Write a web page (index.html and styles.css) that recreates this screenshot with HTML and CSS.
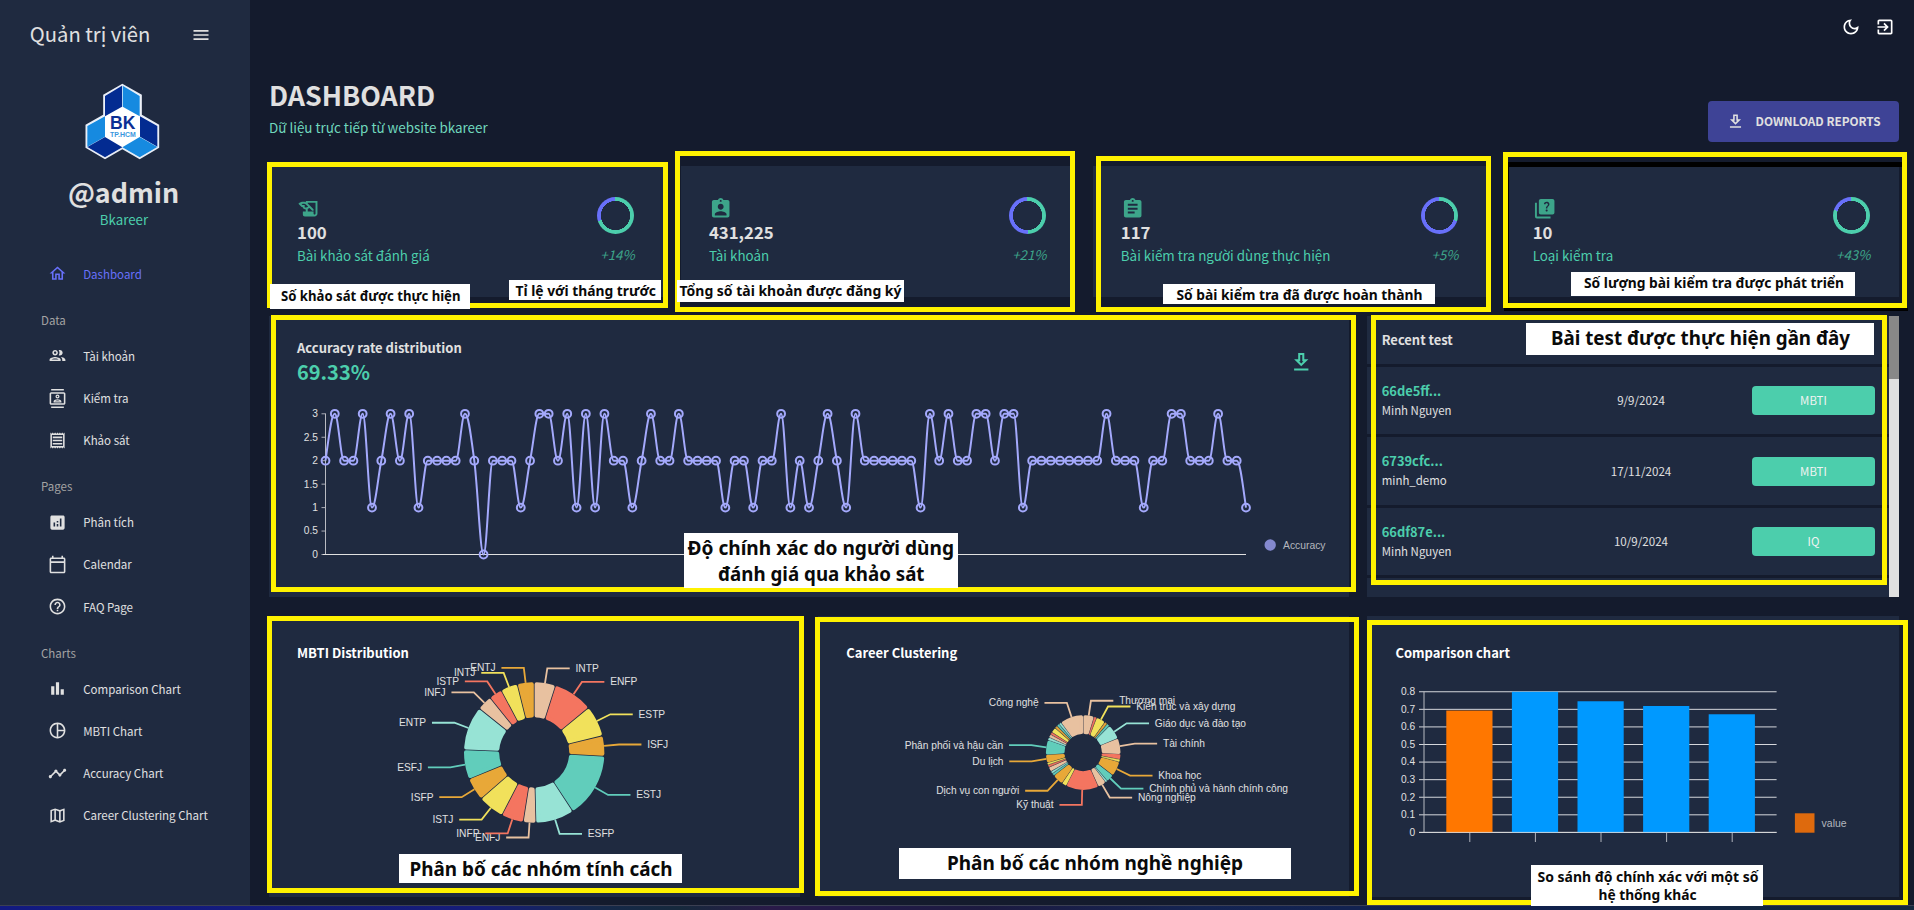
FILE: index.html
```html
<!DOCTYPE html>
<html lang="vi">
<head>
<meta charset="utf-8">
<title>Dashboard</title>
<link rel="stylesheet" href="styles.css">
</head>
<body>
<div class="app">
  <aside class="sidebar">
    <div class="brand">
      <span class="brand-name">Quản trị viên</span>
      <svg class="icon-menu" viewBox="0 0 24 24"><path d="M3 18h18v-2H3v2zm0-5h18v-2H3v2zm0-7v2h18V6z"/></svg>
    </div>
    <svg class="logo" viewBox="256 249 224 230">
      <path d="M368 254L424 286V346L476 376V442L420 475L368 445L316 475L260 442V376L313 346V286Z" fill="#fff" stroke="#e9eef7" stroke-width="5"/>
      <path d="M367 257V320L316 349V288Z" fill="#032b91"/>
      <path d="M369 257V320L420 349V288Z" fill="#168ae0"/>
      <path d="M263 378L316 349V410L263 440Z" fill="#168ae0"/>
      <path d="M263 441L316 411L368 442L316 472Z" fill="#032b91"/>
      <path d="M421 349L473 378V440L421 410Z" fill="#032b91"/>
      <path d="M420 411L473 441L420 472L368 442Z" fill="#168ae0"/>
      <text x="331" y="388" class="logo-bk" textLength="76" lengthAdjust="spacingAndGlyphs">BK</text>
      <text x="331" y="410" class="logo-city" textLength="77" lengthAdjust="spacingAndGlyphs">TP.HCM</text>
    </svg>
    <div class="user-name">@admin</div>
    <div class="user-role">Bkareer</div>
    <nav class="menu">
      <a class="item active"><svg viewBox="0 0 24 24"><path d="M12 5.69l5 4.5V18h-2v-6H9v6H7v-7.81l5-4.5M12 3L2 12h3v8h6v-6h2v6h6v-8h3L12 3z"/></svg>Dashboard</a>
      <div class="section">Data</div>
      <a class="item"><svg viewBox="0 0 24 24"><path d="M9 13.75c-2.34 0-7 1.17-7 3.5V19h14v-1.75c0-2.33-4.66-3.5-7-3.5zM4.34 17c.84-.58 2.87-1.25 4.66-1.25s3.82.67 4.66 1.25H4.34zM9 12c1.93 0 3.5-1.57 3.5-3.5S10.93 5 9 5 5.5 6.57 5.5 8.5 7.07 12 9 12zm0-5c.83 0 1.5.67 1.5 1.5S9.83 10 9 10s-1.5-.67-1.5-1.5S8.17 7 9 7zm7.04 6.81c1.16.84 1.96 1.96 1.96 3.44V19h4v-1.75c0-2.02-3.5-3.17-5.96-3.44zM15 12c1.93 0 3.5-1.57 3.5-3.5S16.93 5 15 5c-.54 0-1.04.13-1.5.35.63.89 1 1.98 1 3.15s-.37 2.26-1 3.15c.46.22.96.35 1.5.35z"/></svg>Tài khoản</a>
      <a class="item"><svg viewBox="0 0 24 24"><path d="M20 4H4c-1.1 0-2 .9-2 2v12c0 1.1.9 2 2 2h16c1.1 0 2-.9 2-2V6c0-1.1-.9-2-2-2zm0 14H4V6h16v12zM4 0h16v2H4zM4 22h16v2H4zM12 12c1.38 0 2.5-1.12 2.5-2.5S13.38 7 12 7 9.5 8.12 9.5 9.5 10.62 12 12 12zm0-3.5c.55 0 1 .45 1 1s-.45 1-1 1-1-.45-1-1 .45-1 1-1zm5 7.49C17 13.9 13.69 13 12 13s-5 .9-5 2.99V17h10v-1.01zm-8.19-.49c.61-.52 2.03-1 3.19-1 1.17 0 2.59.48 3.2 1H8.81z"/></svg>Kiểm tra</a>
      <a class="item"><svg viewBox="0 0 24 24"><path d="M19.5 3.5L18 2l-1.5 1.5L15 2l-1.5 1.5L12 2l-1.5 1.5L9 2 7.5 3.5 6 2 4.5 3.5 3 2v20l1.5-1.5L6 22l1.5-1.5L9 22l1.5-1.5L12 22l1.5-1.5L15 22l1.5-1.5L18 22l1.5-1.5L21 22V2l-1.5 1.5zM19 19.09H5V4.91h14v14.18zM6 15h12v2H6zm0-4h12v2H6zm0-4h12v2H6z"/></svg>Khảo sát</a>
      <div class="section">Pages</div>
      <a class="item"><svg viewBox="0 0 24 24"><path d="M19 3H5c-1.1 0-2 .9-2 2v14c0 1.1.9 2 2 2h14c1.1 0 2-.9 2-2V5c0-1.1-.9-2-2-2zM9 17H7v-5h2v5zm4 0h-2v-3h2v3zm0-5h-2v-2h2v2zm4 5h-2V7h2v10z"/></svg>Phân tích</a>
      <a class="item"><svg viewBox="0 0 24 24"><path d="M20 3h-1V1h-2v2H7V1H5v2H4c-1.1 0-2 .9-2 2v16c0 1.1.9 2 2 2h16c1.1 0 2-.9 2-2V5c0-1.1-.9-2-2-2zm0 18H4V10h16v11zm0-13H4V5h16v3z"/></svg>Calendar</a>
      <a class="item"><svg viewBox="0 0 24 24"><path d="M11 18h2v-2h-2v2zm1-16C6.48 2 2 6.48 2 12s4.48 10 10 10 10-4.48 10-10S17.52 2 12 2zm0 18c-4.41 0-8-3.59-8-8s3.59-8 8-8 8 3.59 8 8-3.59 8-8 8zm0-14c-2.21 0-4 1.79-4 4h2c0-1.1.9-2 2-2s2 .9 2 2c0 2-3 1.75-3 5h2c0-2.25 3-2.5 3-5 0-2.21-1.79-4-4-4z"/></svg>FAQ Page</a>
      <div class="section">Charts</div>
      <a class="item"><svg viewBox="0 0 24 24"><path d="M4 9h4v11H4zm12 4h4v7h-4zm-6-9h4v16h-4z"/></svg>Comparison Chart</a>
      <a class="item"><svg viewBox="0 0 24 24"><path d="M12 2C6.48 2 2 6.48 2 12s4.48 10 10 10 10-4.48 10-10S17.52 2 12 2zm1 2.07c3.61.45 6.48 3.33 6.93 6.93H13V4.07zM4 12c0-4.06 3.07-7.44 7-7.93v15.87c-3.93-.5-7-3.88-7-7.94zm9 7.93V13h6.93c-.45 3.61-3.32 6.48-6.93 6.93z"/></svg>MBTI Chart</a>
      <a class="item"><svg viewBox="0 0 24 24"><path d="M23 8c0 1.1-.9 2-2 2-.18 0-.35-.02-.51-.07l-3.56 3.55c.05.16.07.34.07.52 0 1.1-.9 2-2 2s-2-.9-2-2c0-.18.02-.36.07-.52l-2.55-2.55c-.16.05-.34.07-.52.07s-.36-.02-.52-.07l-4.55 4.56c.05.16.07.33.07.51 0 1.1-.9 2-2 2s-2-.9-2-2 .9-2 2-2c.18 0 .35.02.51.07l4.56-4.55C8.02 9.36 8 9.18 8 9c0-1.1.9-2 2-2s2 .9 2 2c0 .18-.02.36-.07.52l2.55 2.55c.16-.05.34-.07.52-.07s.36.02.52.07l3.55-3.56C19.02 8.35 19 8.18 19 8c0-1.1.9-2 2-2s2 .9 2 2z"/></svg>Accuracy Chart</a>
      <a class="item"><svg viewBox="0 0 24 24"><path d="M20.5 3l-.16.03L15 5.1 9 3 3.36 4.9c-.21.07-.36.25-.36.48V20.5c0 .28.22.5.5.5l.16-.03L9 18.9l6 2.1 5.64-1.9c.21-.07.36-.25.36-.48V3.5c0-.28-.22-.5-.5-.5zM10 5.47l4 1.4v11.66l-4-1.4V5.47zm-5 .99l3-1.01v11.7l-3 1.16V6.46zm14 11.08l-3 1.01V6.86l3-1.16v11.84z"/></svg>Career Clustering Chart</a>
    </nav>
  </aside>

  <main class="main">
    <div class="topbar">
      <svg viewBox="0 0 24 24"><path d="M9.37 5.51c-.18.64-.27 1.31-.27 1.99 0 4.08 3.32 7.4 7.4 7.4.68 0 1.35-.09 1.99-.27C17.45 17.19 14.93 19 12 19c-3.86 0-7-3.14-7-7 0-2.93 1.81-5.45 4.37-6.49zM12 3c-4.97 0-9 4.03-9 9s4.03 9 9 9 9-4.03 9-9c0-.46-.04-.92-.1-1.36-.98 1.37-2.58 2.26-4.4 2.26-2.98 0-5.4-2.42-5.4-5.4 0-1.81.89-3.42 2.26-4.4-.44-.06-.9-.1-1.36-.1z"/></svg>
      <svg viewBox="0 0 24 24"><path d="M19 3H5c-1.11 0-2 .9-2 2v4h2V5h14v14H5v-4H3v4c0 1.1.89 2 2 2h14c1.1 0 2-.9 2-2V5c0-1.1-.9-2-2-2zm-8.92 12.59L11.5 17l5-5-5-5-1.41 1.41L12.67 11H3v2h9.67z"/></svg>
    </div>
    <header class="heading">
      <div>
        <h1>DASHBOARD</h1>
        <p>Dữ liệu trực tiếp từ website bkareer</p>
      </div>
      <button class="download"><svg viewBox="0 0 24 24"><path d="M19 9h-4V3H9v6H5l7 7 7-7zm-8 2V5h2v6h1.17L12 13.17 9.83 11H11zm-6 7h14v2H5z"/></svg>DOWNLOAD REPORTS</button>
    </header>

    <div class="grid">
      <section class="card stat">
        <div class="stat-left"><svg viewBox="0 0 24 24"><path d="M9 4v1.38c-.83-.33-1.72-.5-2.61-.5-1.79 0-3.58.68-4.95 2.05l3.33 3.33h1.11v1.11c.86.86 1.98 1.31 3.11 1.36V15H6v3c0 1.1.9 2 2 2h10c1.66 0 3-1.34 3-3V4H9zm-1.11 6.41V8.26H5.61L4.57 7.22a5.07 5.07 0 0 1 1.82-.34c1.34 0 2.59.52 3.54 1.46l1.41 1.41-.2.2a2.7 2.7 0 0 1-1.92.8c-.47 0-.93-.12-1.33-.34zM19 17c0 .55-.45 1-1 1s-1-.45-1-1v-2h-6v-2.59c.57-.23 1.1-.57 1.56-1.03l.2-.2L15.59 14H17v-1.41l-6-5.97V6h8v11z"/></svg><b>100</b><span>Bài khảo sát đánh giá</span></div>
        <div class="stat-right"><div class="ring" style="--p:252deg"></div><em>+14%</em></div>
      </section>
      <section class="card stat">
        <div class="stat-left"><svg viewBox="0 0 24 24"><path d="M19 3h-4.18C14.4 1.84 13.3 1 12 1c-1.3 0-2.4.84-2.82 2H5c-1.1 0-2 .9-2 2v14c0 1.1.9 2 2 2h14c1.1 0 2-.9 2-2V5c0-1.1-.9-2-2-2zm-7 0c.55 0 1 .45 1 1s-.45 1-1 1-1-.45-1-1 .45-1 1-1zm0 4c1.66 0 3 1.34 3 3s-1.34 3-3 3-3-1.34-3-3 1.34-3 3-3zm6 12H6v-1.4c0-2 4-3.1 6-3.1s6 1.1 6 3.1V19z"/></svg><b>431,225</b><span>Tài khoản</span></div>
        <div class="stat-right"><div class="ring" style="--p:180deg"></div><em>+21%</em></div>
      </section>
      <section class="card stat">
        <div class="stat-left"><svg viewBox="0 0 24 24"><path d="M19 3h-4.18C14.4 1.84 13.3 1 12 1c-1.3 0-2.4.84-2.82 2H5c-1.1 0-2 .9-2 2v14c0 1.1.9 2 2 2h14c1.1 0 2-.9 2-2V5c0-1.1-.9-2-2-2zm-7 0c.55 0 1 .45 1 1s-.45 1-1 1-1-.45-1-1 .45-1 1-1zm2 14H7v-2h7v2zm3-4H7v-2h10v2zm0-4H7V7h10v2z"/></svg><b>117</b><span>Bài kiểm tra người dùng thực hiện</span></div>
        <div class="stat-right"><div class="ring" style="--p:108deg"></div><em>+5%</em></div>
      </section>
      <section class="card stat">
        <div class="stat-left"><svg viewBox="0 0 24 24"><path d="M4 6H2v14c0 1.1.9 2 2 2h14v-2H4V6z"/><path d="M20 2H8c-1.1 0-2 .9-2 2v12c0 1.1.9 2 2 2h12c1.1 0 2-.9 2-2V4c0-1.1-.9-2-2-2zm-5.99 13c-.59 0-1.05-.47-1.05-1.05 0-.59.47-1.04 1.05-1.04.59 0 1.04.45 1.04 1.04-.01.58-.45 1.05-1.04 1.05zm2.5-6.17c-.63.93-1.23 1.21-1.56 1.81-.13.24-.18.4-.18 1.18h-1.52c0-.41-.06-1.08.26-1.65.41-.73 1.18-1.16 1.63-1.8.48-.68.21-1.94-1.14-1.94-.88 0-1.32.67-1.5 1.23l-1.37-.57C11.51 5.96 12.52 5 13.99 5c1.23 0 2.08.56 2.51 1.26.37.61.58 1.73.01 2.57z"/></svg><b>10</b><span>Loại kiểm tra</span></div>
        <div class="stat-right"><div class="ring" style="--p:288deg"></div><em>+43%</em></div>
      </section>

      <section class="card accuracy">
        <div class="accuracy-head">
          <div><h2>Accuracy rate distribution</h2><strong>69.33%</strong></div>
          <svg viewBox="0 0 24 24"><path d="M19 9h-4V3H9v6H5l7 7 7-7zm-8 2V5h2v6h1.17L12 13.17 9.83 11H11zm-6 7h14v2H5z"/></svg>
        </div>
        <svg id="line" class="chart" width="1080" height="180" viewBox="269 400 1080 180"></svg>
      </section>

      <section class="recent">
        <div class="recent-list">
          <div class="recent-head">Recent test</div>
          <div class="row"><div><b>66de5ff...</b><span>Minh Nguyen</span></div><time>9/9/2024</time><i>MBTI</i></div>
          <div class="row"><div><b>6739cfc...</b><span>minh_demo</span></div><time>17/11/2024</time><i>MBTI</i></div>
          <div class="row"><div><b>66df87e...</b><span>Minh Nguyen</span></div><time>10/9/2024</time><i>IQ</i></div>
          <div class="row-rest"></div>
        </div>
        <div class="scrollbar"><div class="thumb"></div></div>
      </section>

      <section class="card panel"><h2>MBTI Distribution</h2><svg id="mbti" class="chart" width="531" height="226" viewBox="269 671 531 226"></svg></section>
      <section class="card panel"><h2>Career Clustering</h2><svg id="career" class="chart" width="531" height="226" viewBox="818 671 531 226"></svg></section>
      <section class="card panel"><h2>Comparison chart</h2><svg id="bars" class="chart" width="531" height="226" viewBox="1367.4 671 531 226"></svg></section>
    </div>
  </main>
</div>
<div class="bottom-strip"></div>

<svg class="notes" width="1914" height="910" viewBox="0 0 1914 910">
  <g fill="#000">
    <rect x="1508" y="162" width="394" height="5"/><rect x="1508" y="162" width="1" height="141"/><rect x="1504" y="308" width="404" height="3"/>
  </g>
  <g fill="none" stroke="#fff200" stroke-width="5">
    <rect x="269.5" y="164.5" width="396" height="141"/>
    <rect x="677.5" y="153.5" width="395" height="156"/>
    <rect x="1098.5" y="158.5" width="390" height="151"/>
    <rect x="1505.5" y="154.5" width="399" height="151"/>
    <rect x="273.5" y="317.5" width="1080" height="272"/>
    <rect x="1373.5" y="317.5" width="511" height="265"/>
    <rect x="269.5" y="618.5" width="532" height="272"/>
    <rect x="817.5" y="619.5" width="539" height="274"/>
    <rect x="1369.5" y="622.5" width="536" height="280"/>
  </g>
  <g fill="#fff">
    <rect x="270" y="284" width="200" height="25"/><rect x="509" y="280" width="152" height="20"/>
    <rect x="677" y="280" width="227" height="22"/><rect x="1163" y="284" width="272" height="20"/>
    <rect x="1571" y="272" width="284" height="24"/><rect x="1526" y="323" width="348" height="32"/>
    <rect x="684" y="533" width="274" height="55"/><rect x="399" y="854" width="283" height="29"/>
    <rect x="899" y="848" width="392" height="31"/><rect x="1531" y="865" width="232" height="41"/>
  </g>
  <g class="note-text">
    <text x="281" y="300.5" textLength="179.5" lengthAdjust="spacingAndGlyphs">Số khảo sát được thực hiện</text>
    <text x="515.5" y="296.2" textLength="140.5" lengthAdjust="spacingAndGlyphs">Tỉ lệ với tháng trước</text>
    <text x="679.5" y="296.2" textLength="222" lengthAdjust="spacingAndGlyphs">Tổng số tài khoản được đăng ký</text>
    <text x="1176.5" y="300.1" textLength="246" lengthAdjust="spacingAndGlyphs">Số bài kiểm tra đã được hoàn thành</text>
    <text x="1584" y="288" textLength="260" lengthAdjust="spacingAndGlyphs">Số lượng bài kiểm tra được phát triển</text>
    <g class="big">
      <text x="1551" y="344.8" textLength="299" lengthAdjust="spacingAndGlyphs">Bài test được thực hiện gần đây</text>
      <text x="687.5" y="555" textLength="266.5" lengthAdjust="spacingAndGlyphs">Độ chính xác do người dùng</text>
      <text x="718" y="581" textLength="206.5" lengthAdjust="spacingAndGlyphs">đánh giá qua khảo sát</text>
      <text x="409.5" y="875.5" textLength="263" lengthAdjust="spacingAndGlyphs">Phân bố các nhóm tính cách</text>
      <text x="947" y="870" textLength="296" lengthAdjust="spacingAndGlyphs">Phân bố các nhóm nghề nghiệp</text>
    </g>
    <g class="mid">
      <text x="1537.5" y="881.5" textLength="221" lengthAdjust="spacingAndGlyphs">So sánh độ chính xác với một số</text>
      <text x="1598.5" y="900.3" textLength="98" lengthAdjust="spacingAndGlyphs">hệ thống khác</text>
    </g>
  </g>
</svg>
<script src="charts.js"></script>
</body>
</html>
```
FILE: styles.css
```css
* { box-sizing: border-box; }
body {
  margin: 0;
  width: 1914px;
  height: 910px;
  overflow: hidden;
  background: #141b2d;
  color: #e0e0e0;
  font-family: "Noto Sans CJK SC", "Noto Sans", sans-serif;
}
svg { fill: currentColor; display: block; }
h1, h2, p { margin: 0; }

.app { display: flex; height: 905px; }

.sidebar { width: 250px; flex: none; background: #1f2a40; }
.brand { display: flex; align-items: center; height: 50px; margin-top: 9px; padding-left: 29.8px; }
.brand-name { width: 160.8px; font-size: 20.2px; line-height: 50px; }
.icon-menu { width: 20px; height: 20px; margin-top: 1px; }
.logo { width: 74.7px; height: 76.7px; margin: 24px 0 0 85.3px; }
.logo-bk { font: bold 56px "Liberation Sans", sans-serif; fill: #0b2f94; }
.logo-city { font: bold 23px "Liberation Sans", sans-serif; fill: #3a97dd; }
.user-name { margin-top: 13px; padding-right: 3px; text-align: center; font-size: 26.8px; font-weight: 700; line-height: 37px; }
.user-role { padding-right: 2px; text-align: center; font-size: 13.3px; line-height: 20px; color: #4cceac; }
.menu { margin-top: 23px; }
.item { display: flex; align-items: center; height: 42.15px; padding-left: 48px; font-size: 11.53px; line-height: 20px; white-space: nowrap; }
.item svg { width: 19px; height: 19px; margin-right: 16.2px; }
.item.active { color: #6870fa; }
.section { height: 40px; padding: 10px 0 0 41px; font-size: 11.5px; line-height: 30px; color: #a3a3a3; }

.main { flex: 1; padding: 0 15.4px 0 19px; }
.topbar { display: flex; justify-content: flex-end; gap: 13.5px; height: 76.5px; padding: 16.8px 4.1px 0 0; }
.topbar svg { width: 20px; height: 20px; fill: #fff; }
.heading { display: flex; justify-content: space-between; height: 89.5px; }
.heading h1 { font-size: 26.8px; line-height: 36px; margin-bottom: 4.7px; }
.heading p { font-size: 13.45px; line-height: 20px; color: #70d8bd; }
.download {
  display: flex; align-items: center; width: 191px; height: 41px; margin-top: 24.5px; padding: 0 0 1px 18.5px;
  border: 0; border-radius: 4px; background: #3e4396; color: #e0e0e0;
  font: 700 11.75px/20px "Noto Sans CJK SC", sans-serif; white-space: nowrap;
}
.download svg { width: 19px; height: 19px; margin-right: 10.5px; }

.grid { display: grid; grid-template-columns: repeat(12, minmax(0, 1fr)); grid-template-rows: 131px 281px 281px; gap: 19px 18px; }
.card { background: #1f2a40; }

.stat { grid-column: span 3; display: flex; justify-content: space-between; padding: 31px 27px 0 28px; }
.stat-left { display: flex; flex-direction: column; }
.stat-left svg { width: 23.4px; height: 23.4px; color: #3da58a; }
.stat-left b { margin-top: 1px; font-size: 16.8px; line-height: 22px; }
.stat-left span { margin-top: 1.2px; font-size: 13.4px; line-height: 20px; color: #4cceac; }
.stat-right { display: flex; flex-direction: column; align-items: flex-end; }
.ring {
  width: 37px; height: 37px; margin-right: 2px; border-radius: 50%;
  background: radial-gradient(closest-side, #1f2a40 78%, transparent 80%), conic-gradient(#4cceac var(--p), #6870fa var(--p));
}
.stat-right em { margin: 10.6px 1.2px 0 0; font-size: 13.3px; line-height: 20px; color: #3da58a; }

.accuracy { grid-column: span 8; }
.accuracy-head { display: flex; justify-content: space-between; height: 84px; padding: 22px 36px 0 28px; }
.accuracy-head h2 { font-size: 13px; line-height: 20px; }
.accuracy-head strong { display: block; margin-top: 2px; font-size: 20px; line-height: 24px; color: #4cceac; }
.accuracy-head svg { width: 24.5px; height: 24.5px; margin-top: 12px; color: #4cceac; }

.recent { grid-column: span 4; display: flex; overflow: hidden; }
.recent-list { flex: 1; display: grid; grid-template-rows: 48px 67px 68px 67px 19px; gap: 3px; }
.recent-head { padding: 13px 13.5px 0 14.3px; background: #1f2a40; font-size: 12.95px; font-weight: 700; line-height: 21px; }
.row { display: flex; align-items: center; justify-content: space-between; padding: 0 13.8px 0 14.3px; background: #1f2a40; font-size: 11.45px; }
.row div { width: 136px; }
.row b, .row span { display: block; line-height: 19px; }
.row b { margin-top: -1px; font-size: 12.9px; color: #4cceac; }
.row span { margin-top: 1px; }
.row time { width: 120px; margin-right: -12.6px; padding-bottom: 1px; text-align: center; line-height: 20px; font-size: 11.6px; }
.row i { width: 123.5px; height: 29px; border-radius: 4px; background: #4cceac; text-align: center; font-style: normal; line-height: 28px; color: #f0f3f2; }
.row-rest { background: #1f2a40; }
.scrollbar { width: 9.6px; background: #e0e0e0; }
.thumb { height: 63px; background: #888; }

.panel { grid-column: span 4; }
.panel h2 { height: 55px; padding: 27px 0 0 28px; font-size: 13px; line-height: 20px; color: #fff; }

.chart { overflow: visible; }
.chart text { font: 10.2px "Liberation Sans", sans-serif; fill: #e0e0e0; }
.chart .legend { fill: #b4b7be; }
.end { text-anchor: end; }

.bottom-strip {
  height: 5px; border-top: 1px solid #3b3f52;
  background: linear-gradient(90deg, #121a80 0, #151c78 480px, #15294a 600px, #16293c 680px, #2a1a48 770px, #221a48 850px, #1c1a40 980px, #142452 1200px, #10204e 1500px, #14283f 1800px);
}

.notes { position: absolute; left: 0; top: 0; pointer-events: none; }
.note-text { font: bold 14px "Noto Sans", "Open Sans", sans-serif; fill: #0a0a0a; }
.big { font-size: 20px; }
.mid { font-size: 15px; }
```
FILE: charts.js
```js
const el = (id, html) => { document.getElementById(id).innerHTML = html; };

/* Accuracy line: 100 ratings from 0 to 3, drawn with monotone cubic segments */
(() => {
  const v = [...('2322312323' + '1222232022' + '2123323131' + '3221232232' + '2221221223' +
    '1212321322' + '2222132322' + '3323312222' + '2222322212' + '2332223221')].map(Number);
  const x0 = 325.5, x1 = 1246, y0 = 554.5, unit = 46.9, step = (x1 - x0) / (v.length - 1), h = step * 0.37;
  const X = i => x0 + i * step, Y = i => y0 - v[i] * unit;
  const slope = i => (Y(i + 1) - Y(i)) / step;
  const last = v.length - 1;
  const m = v.map((_, i) => {
    if (i === 0 || i === last) return 0;
    const a = slope(i - 1), b = slope(i);
    return (Math.sign(a) + Math.sign(b)) * Math.min(Math.abs(a), Math.abs(b), 0.5 * Math.abs((a + b) / 2)) || 0;
  });
  m[0] = 1.4 * slope(0);
  m[last] = 1.4 * slope(last - 1);
  let d = `M${X(0)} ${Y(0)}`, dots = '';
  for (let i = 1; i <= last; i++) {
    d += `C${X(i - 1) + h} ${Y(i - 1) + m[i - 1] * h} ${X(i) - h} ${Y(i) - m[i] * h} ${X(i)} ${Y(i)}`;
  }
  v.forEach((_, i) => { dots += `<circle cx="${X(i)}" cy="${Y(i)}" r="3.9"/>`; });
  let axis = '';
  for (let t = 0; t <= 3; t += 0.5) {
    const y = y0 - t * unit;
    axis += `<path d="M321.5 ${y}H325.5" stroke="#a9acb5"/><text class="end" x="318" y="${y + 3.4}">${t}</text>`;
  }
  el('line', `${axis}<path d="M325.5 413.5V554.5" stroke="#b9bbc2"/><path d="M323 554.5H1246" stroke="#e0e0e0"/>
    <path d="${d}" fill="none" stroke="#a4a9fc" stroke-width="2"/>
    <g fill="none" stroke="#a4a9fc" stroke-width="2">${dots}</g>
    <circle cx="1270.2" cy="545" r="5.7" fill="#8489cf"/>
    <text class="legend" x="1283" y="549" textLength="42.5" lengthAdjust="spacingAndGlyphs">Accuracy</text>`);
})();

/* Donut charts: each slice is [end angle, label] */
function donut(id, cx, cy, R, r, slices) {
  const colors = ['#e8c1a0', '#f47560', '#f1e15b', '#e8a838', '#61cdbb', '#97e3d5'];
  const rad = Math.PI / 180;
  const pt = (a, q) => `${(cx + q * Math.sin(a)).toFixed(2)} ${(cy - q * Math.cos(a)).toFixed(2)}`;
  let start = 0, out = '';
  slices.forEach(([end, label], i) => {
    const a = start * rad, b = end * rad, half = (b - a) / 2, c = colors[i % 6], gap = R > 50 ? 0.4 : 0.2;
    const k = Math.max(0.15, Math.min(R > 50 ? 2 : 1.6, r * half - gap - 0.2));
    const oo = Math.asin((k + gap) / (R - k)), oi = Math.min(half * 0.98, Math.asin((k + gap) / (r + k)));
    const big = b - a > Math.PI ? 1 : 0;
    out += `<path d="M${pt(a + oo, R - k)}A${R - k} ${R - k} 0 ${big} 1 ${pt(b - oo, R - k)}L${pt(b - oi, r + k)}A${r + k} ${r + k} 0 ${big} 0 ${pt(a + oi, r + k)}Z" fill="${c}" stroke="${c}" stroke-width="${2 * k}" stroke-linejoin="round"/>`;
    if (label) {
      const mid = (a + b) / 2, s = mid < Math.PI ? 1 : -1;
      const kx = cx + (R + 15) * Math.sin(mid), ky = cy - (R + 15) * Math.cos(mid);
      out += `<path d="M${pt(mid, R)}L${kx} ${ky}h${s * 22.4}" fill="none" stroke="${c}" stroke-width="1.8"/>
        <text ${s < 0 ? 'class="end"' : ''} x="${kx + s * 28.2}" y="${ky + 3.5}">${label}</text>`;
    }
    start = end;
  });
  el(id, out);
}
donut('mbti', 534.2, 752.5, 70.2, 35, [
  [17.7, 'INTP'], [50.5, 'ENFP'], [76.2, 'ESTP'], [93, 'ISFJ'], [146.7, 'ESTJ'], [178.6, 'ESFP'],
  [189, 'ENFJ'], [207.3, 'INFP'], [228.9, 'ISTJ'], [247.8, 'ISFP'], [272.2, 'ESFJ'], [308.7, 'ENTP'],
  [321.1, 'INFJ'], [332, 'ISTP'], [346, 'INTJ'], [360, 'ENTJ']]);
donut('career', 1083.2, 752.5, 37.3, 18.6, [
  [17, 'Thương mại'], [21.3], [35.5, 'Kiến trúc và xây dựng'], [40], [44.5], [67.8, 'Giáo dục và đào tạo'],
  [92.6, 'Tài chính'], [100.5], [104.8], [127.6, 'Khoa học'], [139.8, 'Chính phủ và hành chính công'], [143],
  [156, 'Nông nghiệp'], [207, 'Kỹ thuật'], [214.5], [231.5, 'Dịch vụ con người'], [235.5], [239.5],
  [246.5], [250.5], [254], [266.6, 'Du lịch'], [289.4, 'Phân phối và hậu cần'], [294],
  [299], [303], [311], [315.5], [319.5], [323.6], [360, 'Công nghệ']]);

/* Comparison bars */
(() => {
  const y0 = 832.4, unit = 175.8;
  let out = '';
  for (let i = 0; i <= 8; i++) {
    const y = y0 - i * unit / 10;
    out += `<path d="M1419.4 ${y}H1777" stroke="#d5d7db" stroke-width="1"/><text class="end" x="1415.5" y="${y + 3.4}">${i / 10}</text>`;
  }
  out += '<path d="M1424.4 691.7V832.4" stroke="#b9bbc2"/>';
  [0.693, 0.8, 0.746, 0.719, 0.672].forEach((v, i) => {
    const x = 1446.7 + i * 65.6;
    out += `<rect x="${x}" y="${y0 - v * unit}" width="46.2" height="${v * unit}" fill="${i ? '#0099ff' : '#ff7700'}"/>
      <path d="M${x + 23.5} 833V842" stroke="#b0b3bb"/>`;
  });
  out += `<path d="M1419.4 ${y0}H1777" stroke="#e0e0e0" stroke-opacity=".7"/>
    <rect x="1795.3" y="813.3" width="19.6" height="19.4" fill="#de6a0d"/>
    <text class="legend" x="1822" y="826.5" textLength="25" lengthAdjust="spacingAndGlyphs">value</text>`;
  el('bars', out);
})();
```
